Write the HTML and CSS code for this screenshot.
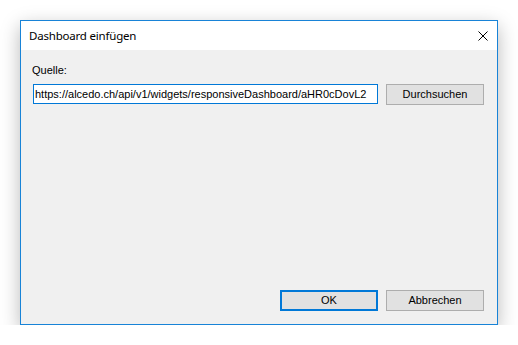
FILE: index.html
```html
<!DOCTYPE html>
<html>
<head>
<meta charset="utf-8">
<link rel="stylesheet" href="styles.css">
</head>
<body>
<div class="dialog">
  <div class="titlebar">
    <span class="title">Dashboard einfügen</span>
    <svg class="close" width="10" height="10" viewBox="0 0 10 10"><path d="M0.5 0.5 L9.5 9.5 M9.5 0.5 L0.5 9.5" stroke="#000" stroke-width="1"/></svg>
  </div>
  <div class="content">
    <div class="label">Quelle:</div>
    <div class="row">
      <div class="textbox">https://alcedo.ch/api/v1/widgets/responsiveDashboard/aHR0cDovL2</div>
      <div class="btn">Durchsuchen</div>
    </div>
    <div class="spacer"></div>
    <div class="actions">
      <div class="btn default">OK</div>
      <div class="btn">Abbrechen</div>
    </div>
  </div>
</div>
</body>
</html>
```
FILE: styles.css
```css
html, body { margin: 0; padding: 0; background: #fff; }
body { font-family: "Liberation Sans", Arial, sans-serif; font-size: 11px; color: #000; }
.dialog {
  box-sizing: border-box;
  width: 478px; height: 305px;
  margin: 20px 0 0 20px;
  border: 1px solid #1883d7;
  display: flex; flex-direction: column;
  box-shadow: 0 6px 18px rgba(0,0,0,0.28);
  background: #f0f0f0;
}
.titlebar {
  height: 29px; background: #fff;
  display: flex; align-items: center; justify-content: space-between;
  padding: 0 9px 0 8px;
}
.title { font-family: "Noto Sans", sans-serif; font-size: 11.5px; letter-spacing: -0.2px; line-height: 14px; margin-top: 1px; color: #000; }
.close { display: block; margin-top: 1px; }
.content { flex: 1; display: flex; flex-direction: column; padding: 14px 13px 13px 11px; }
.label { line-height: 13px; height: 13px; margin-bottom: 7px; }
.row { display: flex; gap: 8px; align-items: flex-start; padding-left: 1px; }
.textbox {
  box-sizing: border-box; width: 345px; height: 20px;
  border: 1px solid #0078d7; background: #fff;
  padding: 2px 1px 0 1px; line-height: 15px;
  white-space: nowrap; overflow: hidden;
}
.btn {
  box-sizing: border-box; width: 98px; height: 21px;
  border: 1px solid #adadad; background: #e1e1e1;
  display: flex; align-items: center; justify-content: center;
  line-height: 13px;
}
.btn.default { border: 2px solid #0078d7; }
.spacer { flex: 1; }
.actions { display: flex; justify-content: flex-end; gap: 8px; }
```
